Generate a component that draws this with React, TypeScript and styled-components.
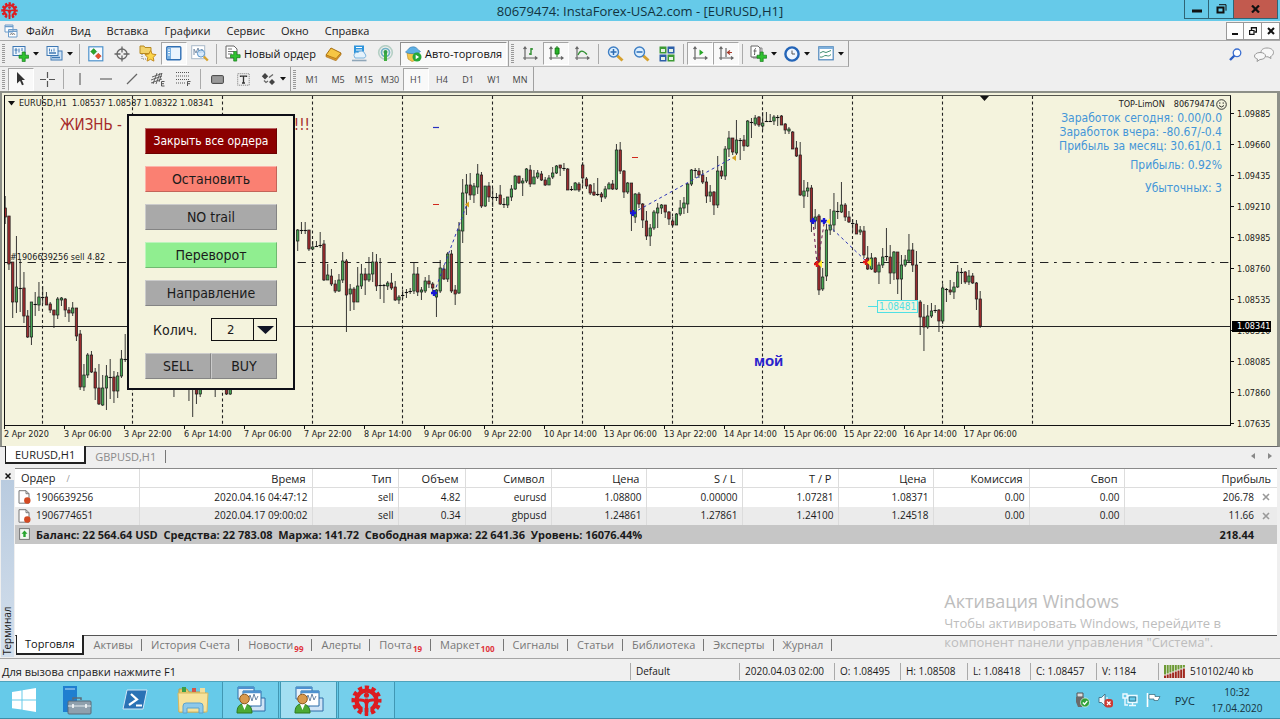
import React from "react";
import styled, { createGlobalStyle, css } from "styled-components";

const UI = '"Open Sans", "Noto Sans", sans-serif';
const CHART = '"DejaVu Sans Condensed", "DejaVu Sans", sans-serif';
const SKY = "#66cae9";
const FACE = "#efefef";
const PAPER = "#f4f3dd";

const GlobalStyle = createGlobalStyle`
  *, *::before, *::after { box-sizing: border-box; }
  body { margin: 0; background: ${FACE}; font-family: ${UI}; font-size: 11px; color: #1a1a1a; }
  button, select, input { font: inherit; color: inherit; margin: 0; }
  svg { display: block; flex: none; }
`;

/* ---------- window shell ---------- */

const Desktop = styled.div`
  display: flex;
  flex-direction: column;
  min-height: 100vh;
  overflow: hidden;
`;

const TitleBar = styled.header`
  display: grid;
  grid-template-columns: 1fr auto 1fr;
  height: 21px;
  background: ${SKY};
`;

const TitleIcon = styled.div`
  padding: 2px 0 0 1px;
`;

const Title = styled.h1`
  margin: 0;
  font-size: 13px;
  line-height: 22px;
  font-weight: 400;
  color: #12333e;
`;

const WindowButtons = styled.div`
  display: flex;
  justify-content: flex-end;
  align-items: flex-start;
  padding-right: 2px;
`;

const WindowButton = styled.button<{ $wide?: boolean }>`
  display: flex;
  align-items: center;
  justify-content: center;
  width: ${(p) => (p.$wide ? 44 : 25)}px;
  height: 19px;
  padding: 0;
  border: 1px solid #2f6475;
  border-top: 0;
  background: ${(p) => (p.$wide ? "#c25a4e" : SKY)};
  & + & { border-left-width: 0; }
`;

const MenuBar = styled.nav`
  display: flex;
  align-items: center;
  height: 20px;
  padding-left: 4px;
  background: #f0f0f0;
  border-bottom: 1px solid #a8a8a8;
`;

const MenuItem = styled.button`
  padding: 0;
  margin-right: 16px;
  border: 0;
  background: none;
  font-size: 11px;
  line-height: 18px;
`;

const ChartMenu = styled(MenuItem)`
  margin-right: 8px;
`;

const MdiButtons = styled.div`
  display: flex;
  margin-left: auto;
`;

const MdiButton = styled.button`
  display: flex;
  align-items: center;
  justify-content: center;
  width: 18px;
  height: 18px;
  padding: 0;
  border: 1px solid #999;
  background: #fdfdfd;
  & + & { border-left: 0; }
`;

/* ---------- tool bars ---------- */

const ToolBar = styled.div<{ $last?: boolean }>`
  display: flex;
  align-items: center;
  height: ${(p) => (p.$last ? 24 : 26)}px;
  background: ${FACE};
`;

const ToolGroup = styled.div<{ $under?: boolean }>`
  display: flex;
  align-items: center;
  height: 100%;
  border-right: 1px solid #a0a0a0;
  border-bottom: ${(p) => (p.$under ? "1px solid #b8b8b8" : "0")};
`;

const Grip = styled.span`
  flex: none;
  width: 3px;
  height: 19px;
  margin: 0 3px 0 2px;
  background: repeating-linear-gradient(#999 0 1px, #efefef 1px 2px);
`;

const ToolSeparator = styled.span`
  flex: none;
  width: 1px;
  height: 20px;
  margin: 0 3px;
  background: #aaa;
`;

const ToolButton = styled.button<{ $on?: boolean; $menu?: boolean }>`
  display: flex;
  align-items: center;
  justify-content: center;
  gap: 4px;
  flex: none;
  width: ${(p) => (p.$menu ? 34 : 26)}px;
  height: 23px;
  padding: 0;
  border: 1px solid transparent;
  background: none;
  font-size: 9px;
  color: #444;
  ${(p) =>
    p.$on &&
    css`
      border-color: #a5a5a5 #fff #fff #a5a5a5;
      background: #f9f9f9;
    `}
`;

const LabelledButton = styled.button<{ $on?: boolean }>`
  display: flex;
  align-items: center;
  gap: 3px;
  flex: none;
  height: 24px;
  padding: 0 4px;
  border: 1px solid transparent;
  background: none;
  font-size: 11px;
  color: #111;
  ${(p) =>
    p.$on &&
    css`
      border-color: #8f8f8f #fff #fff #8f8f8f;
      background: #f9f9f9;
      margin: 0 1px;
    `}
`;

const ToolTail = styled.div`
  display: flex;
  align-items: center;
  gap: 12px;
  margin-left: auto;
  padding-right: 6px;
`;

/* ---------- chart ---------- */

const ChartWindow = styled.main`
  display: flex;
  border: solid #8d9088;
  border-width: 2px 3px 1px 2px;
  border-bottom-color: #66666a;
  background: ${PAPER};
  padding: 2px 2px 0 2px;
`;

const ChartColumn = styled.div`
  flex: 1;
  min-width: 0;
`;

const Plot = styled.div`
  position: relative;
  border: 1px solid #111;
  border-top-color: #55554d;
  overflow: hidden;
`;

const PlotDrawing = styled.svg`
  width: 100%;
  height: 329px;
`;

const TimeAxis = styled.div`
  display: flex;
  height: 20px;
  overflow: hidden;
`;

const TimeLabel = styled.span`
  position: relative;
  flex: none;
  width: 60px;
  padding-top: 1px;
  font-family: ${CHART};
  font-size: 9px;
  line-height: 14px;
  white-space: nowrap;
  &::before {
    content: "";
    position: absolute;
    left: 0;
    top: 0;
    width: 1px;
    height: 3px;
    background: #111;
  }
`;

const PriceAxis = styled.div`
  position: relative;
  flex: none;
  width: 44px;
  padding-top: 3px;
`;

const PriceLabel = styled.div`
  display: flex;
  align-items: center;
  gap: 3px;
  height: 31px;
  font-family: ${CHART};
  font-size: 9px;
  &::before {
    content: "";
    width: 3px;
    height: 1px;
    background: #111;
  }
`;

const CurrentPrice = styled.div`
  position: absolute;
  left: 1px;
  top: 226px;
  width: 39px;
  padding-left: 5px;
  background: #000;
  color: #fff;
  font-family: ${CHART};
  font-size: 9px;
  line-height: 11px;
`;

const ChartCaption = styled.div`
  position: absolute;
  left: 3px;
  top: 0;
  display: flex;
  align-items: center;
  gap: 4px;
  font-family: ${CHART};
  font-size: 9px;
  line-height: 14px;
  white-space: pre;
`;

const Motto = styled.div`
  position: absolute;
  left: 55px;
  top: 20px;
  display: flex;
  justify-content: space-between;
  width: 250px;
  font-family: ${CHART};
  font-size: 15px;
  line-height: 18px;
  color: #a52a2a;
`;

const ChartNote = styled.div`
  position: absolute;
  left: 749px;
  top: 256px;
  font-family: "Liberation Sans", sans-serif;
  font-size: 15px;
  line-height: 18px;
  font-weight: 700;
  color: #2a22cc;
`;

const OrderCaption = styled.div`
  position: absolute;
  left: 5px;
  top: 154px;
  font-family: ${CHART};
  font-size: 9px;
  line-height: 14px;
`;

const LevelTag = styled.div`
  position: absolute;
  left: 872px;
  top: 204px;
  padding: 0 1px;
  border: 1px solid #4fe0e4;
  background: ${PAPER};
  color: #4fe0e4;
  font-family: ${CHART};
  font-size: 10px;
  line-height: 11px;
`;

const Account = styled.div`
  position: absolute;
  right: 3px;
  top: 2px;
  display: flex;
  align-items: center;
  gap: 9px;
  font-family: ${CHART};
  font-size: 9px;
  line-height: 12px;
`;

const AccountId = styled.span`
  display: flex;
  align-items: center;
  gap: 1px;
`;

const Stats = styled.div`
  position: absolute;
  right: 8px;
  top: 15px;
  text-align: right;
  font-family: ${CHART};
  font-size: 12px;
  line-height: 14px;
  color: #4496d8;
`;

const Stat = styled.div<{ $gap?: number }>`
  margin-top: ${(p) => p.$gap ?? 0}px;
`;

/* ---------- trade panel on the chart ---------- */

const TradePanel = styled.section`
  position: absolute;
  left: 122px;
  top: 18px;
  display: flex;
  flex-direction: column;
  gap: 12px;
  width: 168px;
  padding: 12px 16px 9px;
  border: 2px solid #0d0e16;
  background: ${PAPER};
  font-family: ${CHART};
`;

const tones = {
  dark: css`background: #8b0000; color: #fff; font-size: 12px;`,
  salmon: css`background: #fa8072;`,
  grey: css`background: #a9a9a9;`,
  green: css`background: #90ee90;`,
};

const PanelButton = styled.button<{ $tone: keyof typeof tones }>`
  flex: 1;
  height: 26px;
  padding: 0;
  border: 1px solid;
  border-color: rgba(255, 255, 255, 0.4) rgba(0, 0, 0, 0.22) rgba(0, 0, 0, 0.22) rgba(255, 255, 255, 0.4);
  font-size: 14px;
  line-height: 23px;
  color: #1b1b1b;
  ${(p) => tones[p.$tone]}
`;

const PanelRow = styled.div`
  display: flex;
  align-items: center;
`;

const CountLabel = styled.label`
  flex: 1;
  padding-left: 8px;
  font-size: 14px;
  line-height: 22px;
`;

const CountBox = styled.div`
  position: relative;
  display: flex;
  width: 66px;
  height: 23px;
  border: 1px solid #111;
`;

const CountSelect = styled.select`
  width: 100%;
  padding: 0 0 0 15px;
  border: 0;
  border-radius: 0;
  background: transparent;
  appearance: none;
  font-size: 13px;
`;

const CountArrow = styled.span`
  position: absolute;
  right: 0;
  top: 0;
  display: flex;
  align-items: center;
  justify-content: center;
  width: 23px;
  height: 21px;
  border-left: 1px solid #111;
  pointer-events: none;
`;

/* ---------- chart tabs ---------- */

const ChartTabs = styled.div`
  display: flex;
  height: 18px;
  padding-left: 5px;
  background: ${FACE};
  color: #8a8a8a;
`;

const ChartTab = styled.button<{ $on?: boolean }>`
  height: 18px;
  padding: 0 9px;
  border: 0;
  background: none;
  font-size: 11px;
  line-height: 15px;
  ${(p) =>
    p.$on &&
    css`
      margin-top: -1px;
      background: #fff;
      color: #222;
      border: solid #222;
      border-width: 0 2px 2px 1px;
    `}
`;

const TabMark = styled.span`
  width: 1px;
  height: 13px;
  margin-top: 3px;
  background: #777;
`;

const TabScroll = styled.div`
  display: flex;
  align-items: center;
  gap: 13px;
  margin-left: auto;
  padding-right: 8px;
`;

/* ---------- terminal ---------- */

const Terminal = styled.section`
  position: relative;
  display: flex;
  flex: 1;
  margin-top: 3px;
  background: ${FACE};
`;

const TerminalRail = styled.div`
  display: flex;
  flex-direction: column;
  align-items: center;
  width: 15px;
  padding-top: 3px;
`;

const RailClose = styled.button`
  padding: 0;
  height: 9px;
  border: 0;
  background: none;
`;

const RailTitle = styled.div`
  flex: 1;
  width: 13px;
  margin-bottom: 1px;
  background: linear-gradient(#d3dfec, #b9cbdf);
  writing-mode: vertical-rl;
  transform: rotate(180deg);
  text-align: left;
  padding-top: 2px;
  font-size: 10px;
  line-height: 12px;
`;

const TerminalBody = styled.div`
  display: flex;
  flex-direction: column;
  flex: 1;
  min-width: 0;
  margin-right: 3px;
  border-top: 1px solid #8a8a8a;
  background: #fff;
`;

const Orders = styled.table`
  width: 100%;
  border-collapse: collapse;
  table-layout: fixed;
  font-size: 10px;
  line-height: 17px;
`;

const HeadRow = styled.tr`
  height: 18px;
  font-size: 11px;
  border-bottom: 1px solid #ddd;
`;

const BodyRow = styled.tr<{ $alt?: boolean }>`
  height: ${(p) => (p.$alt ? 18 : 19)}px;
  background: ${(p) => (p.$alt ? "#ebebeb" : "#fff")};
`;

const SumRow = styled.tr`
  height: 19px;
  background: #c6c6c6;
  font-size: 11px;
  font-weight: 700;
`;

const Head = styled.th<{ $first?: boolean }>`
  padding: 0 6px;
  border-left: ${(p) => (p.$first ? "0" : "1px solid #ddd")};
  text-align: ${(p) => (p.$first ? "left" : "right")};
  font-weight: 400;
  white-space: pre;
`;

const SortMark = styled.span`
  margin-left: 11px;
  color: #999;
  font-size: 9px;
`;

const Cell = styled.td<{ $first?: boolean }>`
  padding: 0 4px 0 3px;
  border-left: ${(p) => (p.$first ? "0" : "1px solid #dcdcdc")};
  text-align: ${(p) => (p.$first ? "left" : "right")};
  white-space: pre;
`;

const IconText = styled.div`
  display: flex;
  align-items: center;
  gap: 5px;
`;

const Profit = styled.div`
  display: flex;
  align-items: center;
  justify-content: flex-end;
  gap: 8px;
`;

const ProfitSum = styled.div`
  padding-right: 19px;
  text-align: right;
`;

const RowClose = styled.button`
  width: 11px;
  height: 8px;
  padding: 0;
  border: 0;
  background: none;
`;

const TerminalTabs = styled.div`
  display: flex;
  align-items: flex-start;
  height: 23px;
  margin-top: auto;
  padding-left: 1px;
  border-top: 1px solid #555;
  background: ${FACE};
  color: #777;
`;

const TerminalTab = styled.button<{ $on?: boolean }>`
  position: relative;
  display: flex;
  height: 18px;
  padding: 0 9px;
  border: 0;
  background: none;
  font-size: 11px;
  line-height: 17px;
  &:not(:first-child)::after {
    content: "";
    position: absolute;
    right: 0;
    top: 3px;
    width: 1px;
    height: 12px;
    background: #777;
  }
  ${(p) =>
    p.$on &&
    css`
      height: 20px;
      margin-top: -1px;
      padding: 0 8px;
      color: #111;
      background: #fff;
      border: solid #222;
      border-width: 0 2px 2px 1px;
    `}
`;

const Count = styled.span`
  padding: 4px 0 0 1px;
  font-size: 8px;
  font-weight: 700;
  color: #e0343c;
`;

const Watermark = styled.div`
  position: absolute;
  right: 59px;
  bottom: 6px;
  color: #bdbdbd;
  font-size: 13px;
  line-height: 19px;
  pointer-events: none;
`;

const WatermarkTitle = styled.div`
  font-size: 18px;
  line-height: 25px;
`;

/* ---------- status bar ---------- */

const StatusBar = styled.footer`
  display: flex;
  align-items: center;
  height: 23px;
  padding-top: 3px;
  border-top: 1px solid #a5a5a5;
  background: #f0f0f0;
  font-size: 11px;
  line-height: 17px;
  white-space: nowrap;
`;

const StatusHelp = styled.div`
  flex: 1;
  padding-left: 2px;
`;

const StatusCell = styled.div<{ $w: number }>`
  display: flex;
  align-items: center;
  gap: 4px;
  width: ${(p) => p.$w}px;
  height: 17px;
  padding-left: 5px;
  border-left: 1px solid #aaa;
  font-size: 10px;
`;

/* ---------- task bar ---------- */

const TaskBar = styled.div`
  display: flex;
  align-items: stretch;
  height: 38px;
  background: ${SKY};
  border-top: 1px solid #4ea3bd;
  border-bottom: 1px solid #3d8ea8;
`;

const TaskButton = styled.button<{ $state?: "open" | "front" }>`
  display: flex;
  align-items: center;
  justify-content: center;
  width: 58px;
  padding: 0;
  border: 0;
  background: none;
  ${(p) =>
    p.$state &&
    css`
      border: solid #4197b3;
      border-width: 0 1px;
      margin-right: 1px;
      width: 57px;
      background: ${p.$state === "front" ? "#a3dff2" : "#74cfeb"};
    `}
`;

const StartButton = styled(TaskButton)`
  width: 48px;
`;

const Tray = styled.div`
  display: flex;
  align-items: center;
  gap: 8px;
  margin-left: auto;
  color: #16333d;
  font-size: 11px;
`;

const Language = styled.span`
  margin: 0 1px 0 6px;
`;

const Clock = styled.time`
  width: 66px;
  margin-right: 10px;
  text-align: center;
  font-size: 10px;
  line-height: 16px;
`;

/* ---------- icons ---------- */

const Caret = () => (
  <svg width="6" height="4" viewBox="0 0 6 4"><path d="M0 0h6L3 3.6z" fill="#111" /></svg>
);

const Plus = ({ x = 7, y = 7 }: { x?: number; y?: number }) => (
  <path transform={`translate(${x} ${y})`} d="M3.2 0h3v3.2H9.6v3H6.2V9.6h-3V6.2H0v-3h3.2z" fill="#2fc22f" stroke="#14781a" strokeWidth=".7" />
);

const Cog = ({ size }: { size: number }) => (
  <svg width={size} height={size} viewBox="0 0 32 32">
    <g fill="none" stroke="#dc1c20">
      <circle cx="16" cy="16" r="13.5" strokeWidth="4" strokeDasharray="4.4 2.67" strokeDashoffset="2.2" />
      <circle cx="16" cy="16" r="10.2" strokeWidth="4.4" />
      <path d="M16 14v18" strokeWidth="3.4" />
      <path d="M5 15.5h5c3.500 0 6 1.500 6 5c0-3.500 2.500-5 6-5h5" strokeWidth="3" />
    </g>
    <circle cx="16" cy="10.5" r="2.6" fill="#dc1c20" />
    <path d="M13 22v10M19 22v10" stroke={SKY} strokeWidth="2" />
  </svg>
);

const NewChartIcon = () => (
  <svg width="17" height="17" viewBox="0 0 17 17">
    <rect x="1" y="1.5" width="12" height="9" fill="#eef6fd" stroke="#3e78b4" />
    <path d="M4 3v6M2.500 5h3M7 3.5v4M10 3v3" stroke="#3e78b4" />
    <Plus />
  </svg>
);
const ProfilesIcon = () => (
  <svg width="17" height="17" viewBox="0 0 17 17" stroke="#3e78b4">
    <rect x="5" y="6" width="11" height="9" fill="#cfe3f6" />
    <rect x="1" y="1.5" width="11" height="9" fill="#eef6fd" />
    <path d="M3 8h7M6 12.500h8" strokeWidth="1.300" />
    <path d="M3.500 3.500v3M5.500 4.500v2M8 3.500v3" strokeWidth=".9" />
  </svg>
);
const MarketIcon = () => (
  <svg width="16" height="16" viewBox="0 0 16 16">
    <rect x=".8" y=".8" width="14" height="14" fill="#f7fbff" stroke="#4f93cc" strokeWidth="1.2" />
    <path d="M5.700 2.600l3 3-3 3-3-3z" fill="#2aa52a" stroke="#177a17" strokeWidth=".5" />
    <path d="M10.300 7.200l2.900 2.900-2.900 2.900-2.900-2.900z" fill="#e8502c" stroke="#a82c12" strokeWidth=".5" />
  </svg>
);
const TargetIcon = () => (
  <svg width="16" height="16" viewBox="0 0 16 16" fill="none" stroke="#666" strokeWidth="1.3">
    <circle cx="8" cy="8" r="5" />
    <path d="M8 .5v6M8 9.500v6M.5 8h6M9.500 8h6" />
  </svg>
);
const NavigatorIcon = () => (
  <svg width="18" height="17" viewBox="0 0 18 17">
    <path d="M1 1h4l1 1.500h6v6H1z" fill="#f3d36b" stroke="#b78a23" />
    <path d="M3 9v5h4" fill="none" stroke="#777" strokeDasharray="1 1" />
    <path d="M11.500 5.500l1.700 3.500 3.800.6-2.700 2.700.6 3.800-3.400-1.800-3.400 1.800.6-3.800L6 9.600l3.800-.6z" fill="#fbd54a" stroke="#c48a1c" />
  </svg>
);
const PanelIcon = () => (
  <svg width="16" height="15" viewBox="0 0 16 15">
    <rect x=".8" y=".8" width="14" height="13" rx="1" fill="#eaf4fd" stroke="#2f6fb4" strokeWidth="1.4" />
    <path d="M1 2h4v11H1z" fill="#79b1e2" />
    <path d="M2 4h2M2 6.500h2M2 9h2" stroke="#fff" />
  </svg>
);
const TesterIcon = () => (
  <svg width="18" height="17" viewBox="0 0 18 17">
    <rect x=".7" y=".7" width="13" height="13" fill="#fff" stroke="#a9b9c9" />
    <path d="M3 10V4l2 4 2-5 2 5 2-4v4" fill="none" stroke="#7a8fa8" />
    <circle cx="10" cy="8.5" r="3.6" fill="#cfe6fb" fillOpacity=".8" stroke="#5a94c8" />
    <path d="M12.800 11.500l4 4" stroke="#d7a22d" strokeWidth="2.4" />
  </svg>
);
const NewOrderIcon = () => (
  <svg width="16" height="17" viewBox="0 0 16 17">
    <path d="M1 1h8l3 3v9H1z" fill="#fff" stroke="#666" />
    <path d="M3 4h4M3 6.500h6M3 9h4" stroke="#777" />
    <Plus x={5.5} y={6.5} />
  </svg>
);
const BookIcon = () => (
  <svg width="17" height="14" viewBox="0 0 17 14">
    <path d="M1 8l5-7 10 5-5 6.500z" fill="#f6c644" stroke="#a76f12" />
    <path d="M1 8v1.800l10 4 5-6V6l-5 5.500z" fill="#d9962a" stroke="#a76f12" strokeWidth=".6" />
  </svg>
);
const VpsIcon = () => (
  <svg width="17" height="17" viewBox="0 0 17 17">
    <path d="M3 .5h10v8H3z" fill="#2f95dc" />
    <path d="M5 2.500h6M5 5h6" stroke="#fff" />
    <path d="M3 10.500a3 3 0 0 1 4-3 4 4 0 0 1 7 1.500 2.300 2.300 0 0 1-1 4H4z" fill="#e4f2fc" stroke="#79b2dd" />
    <path d="M1 15.500h14.500" stroke="#8fa6b8" strokeWidth="1.6" />
  </svg>
);
const SignalIcon = () => (
  <svg width="17" height="17" viewBox="0 0 17 17" fill="none">
    <circle cx="8.500" cy="7.500" r="6.800" stroke="#b4cfc4" strokeWidth="1.6" />
    <circle cx="8.500" cy="7.500" r="4" stroke="#6fb2c4" strokeWidth="1.7" />
    <path d="M8.500 7.500v8.500" stroke="#3fae3f" strokeWidth="3" />
    <circle cx="8.500" cy="7" r="2" fill="#2f9f46" />
  </svg>
);
const RobotIcon = () => (
  <svg width="17" height="16" viewBox="0 0 17 16">
    <path d="M2 7h11l-1 7-5 1.500L3 13z" fill="#f3c64c" stroke="#b98a20" strokeWidth=".6" />
    <path d="M.5 6c1-1 2-1.500 3-3C5 .5 10 0 12 2.500c1 1.500 2.500 2 3.500 3-2 2.500-12 3-15 .5z" fill="#5eb0e5" stroke="#3579ad" strokeWidth=".6" />
    <circle cx="12" cy="11" r="4.500" fill="#27a83a" />
    <path d="M10.700 8.700l3.400 2.300-3.400 2.300z" fill="#fff" />
  </svg>
);
const Axes = () => <path d="M3 1v13M1 12h14M1.500 3L3 1l1.500 2M13 10.500l2 1.500-2 1.500" fill="none" stroke="#666" strokeWidth="1.2" />;
const BarsIcon = () => (
  <svg width="16" height="15" viewBox="0 0 16 15"><Axes /><path d="M9 2v7M9 3h2M7 8h2" stroke="#2f8f2f" strokeWidth="1.4" /></svg>
);
const CandleIcon = () => (
  <svg width="16" height="15" viewBox="0 0 16 15"><Axes /><path d="M9 0v11" stroke="#157a15" /><path d="M7.200 2h3.800v6H7.200z" fill="#27b527" stroke="#157a15" /></svg>
);
const LineIcon = () => (
  <svg width="16" height="15" viewBox="0 0 16 15"><Axes /><path d="M4 9c2-5 5-5 9-.5" fill="none" stroke="#2f8f2f" strokeWidth="1.2" /></svg>
);
const Loupe = ({ plus }: { plus?: boolean }) => (
  <svg width="17" height="16" viewBox="0 0 17 16">
    <path d="M10 9.500l5.500 5" stroke="#d6a12f" strokeWidth="3" />
    <circle cx="6.500" cy="6" r="5" fill="#dcefff" stroke="#3f7fc4" strokeWidth="1.4" />
    <path d={plus ? "M3.500 6h6M6.500 3v6" : "M3.500 6h6"} stroke="#2c6cb4" strokeWidth="1.5" />
  </svg>
);
const TileIcon = () => (
  <svg width="16" height="16" viewBox="0 0 16 16">
    <path d="M.5.5h7v7h-7zM8.500 8.500h7v7h-7z" fill="#3d9b35" />
    <path d="M8.500.5h7v7h-7zM.5 8.500h7v7h-7z" fill="#2d5fa8" />
    <path d="M2 3h4v3H2zM10 3h4v3h-4zM2 11h4v3H2zM10 11h4v3h-4z" fill="#e8f3e6" />
  </svg>
);
const ScrollIcon = () => (
  <svg width="16" height="15" viewBox="0 0 16 15"><Axes /><path d="M7.500 3.500l4 3-4 3z" fill="#27a527" /></svg>
);
const ShiftIcon = () => (
  <svg width="16" height="15" viewBox="0 0 16 15"><Axes /><path d="M8 2v9" stroke="#666" strokeWidth="1.2" /><path d="M14 6.500h-4M12 4.500l-2.500 2 2.500 2" fill="none" stroke="#a8392a" strokeWidth="1.2" /></svg>
);
const IndicatorIcon = () => (
  <svg width="17" height="17" viewBox="0 0 17 17">
    <path d="M3 3h9v10H3z" fill="#ddd" stroke="#888" />
    <path d="M1 1h7l2 2v9H1z" fill="#fff" stroke="#666" />
    <path d="M6 3.500c-2 0-1 3-1.500 6.500M3.500 6h3" fill="none" stroke="#555" />
    <Plus />
  </svg>
);
const ClockIcon = () => (
  <svg width="16" height="16" viewBox="0 0 16 16">
    <circle cx="8" cy="8" r="6.600" fill="#eef6ff" stroke="#2465b8" strokeWidth="2.4" />
    <path d="M8 4.500V8h3" fill="none" stroke="#555" />
  </svg>
);
const TemplateIcon = () => (
  <svg width="16" height="15" viewBox="0 0 16 15">
    <rect x=".8" y=".8" width="14.400" height="13" fill="#fff" stroke="#4b85bb" strokeWidth="1.2" />
    <path d="M1 2h14" stroke="#7fb0dc" strokeWidth="2" />
    <path d="M2 7l3-1.500 3 1 5-2M2 11c3 1 4-2 6-1.500s3 1 5-1" fill="none" stroke="#3f8f6f" />
  </svg>
);
const CursorIcon = () => (
  <svg width="10" height="15" viewBox="0 0 10 15"><path d="M1 0l8 8H5.800l2 4.500-1.800.8-2-4.500L1 11.500z" fill="#333" /></svg>
);
const CrossIcon = () => (
  <svg width="15" height="15" viewBox="0 0 15 15"><path d="M7.500 0v6M7.500 9v6M0 7.500h6M9 7.500h6" stroke="#555" strokeWidth="1.2" /></svg>
);
const StrokeIcon = ({ d }: { d: string }) => (
  <svg width="14" height="14" viewBox="0 0 14 14"><path d={d} stroke="#666" strokeWidth="1.2" fill="none" /></svg>
);
const ChannelIcon = () => (
  <svg width="16" height="16" viewBox="0 0 16 16" stroke="#555" fill="none">
    <path d="M1 9l11-4M1 12l11-4M2 6l10-3.500M3 13L7 2M6 13l4-11M9 11l3-9" strokeWidth=".9" />
    <path d="M14.500 10.500H11.500v4.500h3M11.500 12.700h2.500" />
  </svg>
);
const FiboIcon = () => (
  <svg width="16" height="16" viewBox="0 0 16 16" stroke="#555" fill="none">
    <path d="M0 1.500h14M0 5h14M0 8.500h14M0 12h9" strokeDasharray="1 1" />
    <path d="M14.500 10.500H11.500V15M11.500 12.700h2.500" />
  </svg>
);
const TextIcon = () => (
  <svg width="13" height="13" viewBox="0 0 13 13" fill="none">
    <rect x=".7" y=".7" width="11.500" height="11.500" stroke="#777" strokeDasharray="1 1" />
    <path d="M3.500 4V3.200h6V4M6.500 3v7M5 10h3" stroke="#333" strokeWidth="1.3" />
  </svg>
);
const ShapesIcon = () => (
  <svg width="15" height="14" viewBox="0 0 15 14">
    <path d="M4 1l3.200 3.200L4 7.400.8 4.200zM11 13l-3-3 3-3 3 3z" fill="#444" />
    <path d="M3 8.500l2 2 2-1.500M8 5.500l4-3" fill="none" stroke="#666" strokeWidth="1.3" />
  </svg>
);
const SearchIcon = () => (
  <svg width="13" height="13" viewBox="0 0 13 13"><path d="M1 12l5-5" stroke="#2c5fc4" strokeWidth="2.4" /><circle cx="8" cy="4.800" r="3.800" fill="#fff" stroke="#3b6fd0" strokeWidth="1.3" /></svg>
);
const ChatIcon = () => (
  <svg width="20" height="15" viewBox="0 0 20 15" fill="#f7f7f7" stroke="#999">
    <path d="M13 1c4 0 6.500 2 6.500 4.300S18 9 16.500 9.500l.5 2-3-1.700C10 10 7 8 7 5.300S9.500 1 13 1z" />
    <path d="M6 5.500c3.500 0 5.500 1.500 5.500 3.500S9 12.500 6 12.500L3 14.500l.5-2.500C1.500 11.500.5 10.500.5 9S2.500 5.500 6 5.500z" />
  </svg>
);
const MdiIcon = () => (
  <svg width="14" height="14" viewBox="0 0 14 14" fill="#fff" stroke="#6c9cca">
    <path d="M1 1h8v7H1zM4.500 5.500h8.500v7.500H4.500z" />
    <path d="M1 2.500h8M4.500 7.200h8.500" strokeWidth="1.4" />
    <path d="M6 11l1.500-2 1 2 1-2 1.500 2" fill="none" stroke="#777" strokeWidth=".8" />
  </svg>
);
const DocIcon = () => (
  <svg width="13" height="14" viewBox="0 0 13 14">
    <path d="M1 .7h7l3 3v9.500H1z" fill="#fff" stroke="#777" />
    <path d="M8 .7v3h3" fill="none" stroke="#777" />
    <circle cx="9.300" cy="10.500" r="3.200" fill="#d34a23" />
  </svg>
);
const BalanceIcon = () => (
  <svg width="13" height="12" viewBox="0 0 13 12">
    <rect x="1.600" y=".6" width="9.800" height="10.800" fill="#f2f8f2" stroke="#777" />
    <path d="M6.500 2.500l3 3.200H7.700V9H5.300V5.700H3.500z" fill="#27a52f" />
  </svg>
);
const GreyCross = () => (
  <svg width="8" height="8" viewBox="0 0 8 8"><path d="M1 1l6 6M7 1L1 7" stroke="#999" strokeWidth="1.600" /></svg>
);
const BandwidthIcon = () => (
  <svg width="22" height="13" viewBox="0 0 22 13">
    {[0, 1, 2, 3, 4, 5, 6, 7].map((n) => (
      <g key={n}>
        <rect x={n * 2.7} y="0" width="2" height={9.5 - n * 1} fill="#6d9a34" />
        <rect x={n * 2.7} y={10.5 - n * 1} width="2" height={2.5 + n * 1} fill="#a0271d" />
      </g>
    ))}
  </svg>
);
const WindowsIcon = () => (
  <svg width="26" height="24" viewBox="0 0 26 24" fill="#fff">
    <path d="M1 4l9.500-1.500V11.500H1zM11.500 2.300L25 0v11.500H11.500zM1 12.500h9.500v9L1 20.200zM11.500 12.500H25V24l-13.500-2.200z" />
  </svg>
);
const ServerIcon = () => (
  <svg width="30" height="30" viewBox="0 0 30 30">
    <path d="M1 1h14v26H1z" fill="#1f7fd0" />
    <path d="M3 4h10" stroke="#bfe0f7" />
    <path d="M11 15v-2h8v2" fill="none" stroke="#5c6d7a" strokeWidth="1.5" />
    <rect x="6" y="16" width="23" height="13" rx="1" fill="#8fa0ad" stroke="#586a78" />
    <path d="M6 21h23" stroke="#e3eaee" />
    <path d="M11 19v4M24 19v4" stroke="#fff" strokeWidth="1.5" />
  </svg>
);
const ShellIcon = () => (
  <svg width="26" height="22" viewBox="0 0 26 22">
    <path d="M5 1h20l-4 19H1z" fill="#2a72b5" stroke="#cfe6f6" />
    <path d="M9 5l6 5.500L7 16M14 16.500h6" fill="none" stroke="#fff" strokeWidth="2.200" />
  </svg>
);
const FolderIcon = () => (
  <svg width="32" height="28" viewBox="0 0 32 28">
    <path d="M2 3h8l2 3h16v20H2z" fill="#e9c869" stroke="#c29f45" />
    <path d="M5 1h4v5H5z" fill="#38a04a" /><path d="M15 2h4v4h-4z" fill="#d2564a" /><path d="M23 2h5v5h-5z" fill="#f1df9f" />
    <path d="M1 7h30l-1 19H2z" fill="#f7e29b" stroke="#d4b760" />
    <path d="M6 27v-7q0-3 3-3h14q3 0 3 3v7h-4v-5H10v5z" fill="#8ec9ea" stroke="#5aa3cf" />
  </svg>
);
const TraderIcon = () => (
  <svg width="30" height="28" viewBox="0 0 30 28">
    <path d="M2 1h16v12H2z" fill="#e7f1fa" stroke="#2d6ca8" />
    <path d="M2 2h16" stroke="#4e91cf" strokeWidth="2" />
    <path d="M19 12h10v13H13z" fill="#cfe3f5" stroke="#2d6ca8" />
    <path d="M7 5h18v15H7z" fill="#fff" stroke="#2d6ca8" />
    <path d="M7 6h18" stroke="#4e91cf" strokeWidth="2.5" />
    <path d="M12 14l2-5 2 6 2-7 2 6 2-4" fill="none" stroke="#6a86a6" />
    <path d="M1 27c0-6 2-9 7-9s8 3 8 9z" fill="#4caa35" stroke="#2d7a1d" />
    <path d="M6 18l2.500 6 2.500-6z" fill="#fff" />
    <circle cx="8.500" cy="13" r="4.800" fill="#d99a4e" stroke="#8f5a20" />
  </svg>
);
const UsbIcon = () => (
  <svg width="16" height="16" viewBox="0 0 16 16">
    <path d="M3 1h6v4H3z" fill="#ddd" stroke="#555" /><path d="M2 5h8v5l-2 5H4l-2-5z" fill="#6a6a6a" />
    <circle cx="11" cy="10.500" r="4.500" fill="#2fa33a" stroke="#fff" strokeWidth=".6" />
    <path d="M8.800 10.500l1.700 1.700 2.800-3.200" fill="none" stroke="#fff" strokeWidth="1.3" />
  </svg>
);
const SoundIcon = () => (
  <svg width="16" height="15" viewBox="0 0 16 15">
    <path d="M1 4.500h2.500L7 1v12L3.500 9.500H1z" fill="#f4fbfe" stroke="#376576" strokeWidth=".8" />
    <path d="M9 4v5" stroke="#fff" />
    <rect x="6.500" y="6" width="8.500" height="8.500" rx="3" fill="#cc3a33" />
    <path d="M9 8.500l3.500 3.500M12.500 8.500L9 12" stroke="#fff" strokeWidth="1.3" />
  </svg>
);
const NetIcon = () => (
  <svg width="16" height="14" viewBox="0 0 16 14" fill="none" stroke="#eefaff" strokeWidth="1.4">
    <path d="M6 2.500h9v7H6zM7 12.500h7M10.500 10v2.500M1 1h4v4H1zM3 5v7h3" />
    <path d="M7.200 4h6.500v4H7.200z" stroke="#2e6a80" strokeWidth=".8" />
  </svg>
);
const FlagIcon = () => (
  <svg width="15" height="14" viewBox="0 0 15 14"><path d="M1.500 0v14" stroke="#fff" strokeWidth="1.6" /><path d="M3 1.500h6v2h5l-2 4H8v-1.500H3z" fill="#fff" stroke="#376576" strokeWidth=".7" /></svg>
);
const Smile = () => (
  <svg width="11" height="11" viewBox="0 0 11 11" fill="none" stroke="#222" strokeWidth=".9">
    <circle cx="5.500" cy="5.500" r="4.800" /><path d="M3 6.500q2.500 3 5 0M3.800 3.300v1.500M7.200 3.300v1.500" />
  </svg>
);

/* ---------- price series ---------- */

type Bar = [index: number, high: number, low: number, top: number, bottom: number, kind: "u" | "d" | "n"];

// Columns: bar number, high, low, body top, body bottom; u = rising, d = falling, n = flat.
const SERIES = `
0 196 224 208 217 d;1 216 270 216 264 d;2 262 318 262 302 d;3 236 313 287 302 u;4 260 312 288 289 n;5 272 323 288 316 d;
6 310 338 316 337 d;7 302 345 302 337 u;8 292 316 304 305 n;9 282 311 297 305 u;10 286 304 297 298 n;11 292 305 297 305 d;
12 302 313 304 310 d;13 310 328 310 315 d;14 297 319 299 315 u;15 297 306 298 300 u;16 298 317 299 310 d;17 307 322 310 313 d;
18 302 316 308 313 u;19 308 341 308 336 d;20 330 390 334 387 d;21 364 391 375 387 u;22 353 378 355 375 u;23 351 373 355 372 d;
24 368 400 372 388 d;25 364 405 388 404 d;26 375 406 388 405 u;27 365 410 376 388 u;28 359 399 377 378 n;29 371 403 377 391 d;
30 372 398 376 391 u;31 350 378 359 376 u;32 334 362 359 360 n;45 370 397 380 381 n;49 380 401 380 381 n;50 380 417 380 386 n;
51 380 404 380 394 d;52 380 397 380 394 u;56 380 397 380 384 n;59 380 395 380 394 d;60 380 395 380 394 u;
78 229 251 230 241 u;79 222 234 230 231 n;80 222 234 230 231 n;81 230 251 230 249 d;82 241 250 247 249 u;83 241 247 246 247 n;
84 232 248 245 246 n;85 240 281 244 280 d;86 264 280 275 280 u;87 269 286 276 284 d;88 280 293 284 291 d;89 274 292 280 291 u;
90 252 283 261 280 u;91 259 332 261 295 d;92 284 311 289 294 u;93 287 310 289 302 d;94 267 302 286 302 u;95 264 289 274 286 u;
96 268 295 274 280 d;97 257 282 274 280 u;98 252 282 262 274 u;99 254 291 262 286 d;100 258 299 285 286 n;101 284 303 285 286 n;
102 281 290 283 286 u;103 273 290 283 288 d;104 281 301 287 300 d;105 295 304 297 300 u;106 290 299 295 296 n;107 289 298 292 293 n;
108 288 294 291 292 n;109 263 294 274 291 u;110 267 296 274 292 d;111 287 300 290 292 u;112 277 293 281 291 u;113 275 288 281 284 d;
114 282 294 284 288 d;115 289 317 290 297 u;116 260 293 268 291 u;117 265 280 269 279 d;118 252 282 254 279 u;119 250 293 254 291 d;
120 285 305 290 294 d;121 222 294 230 293 u;122 179 243 193 231 u;123 174 215 185 193 u;124 173 200 185 195 d;125 183 203 186 195 u;
126 164 194 174 187 u;127 172 208 175 206 d;128 186 207 186 206 u;129 182 202 186 197 d;130 188 207 197 198 n;131 193 201 197 198 n;
132 185 205 195 204 d;133 198 208 204 205 n;134 197 208 197 205 u;135 185 201 189 197 u;136 175 190 176 189 u;137 176 184 176 183 d;
138 178 196 181 183 u;139 168 183 169 181 u;140 165 187 170 184 d;141 170 184 177 184 u;142 170 179 173 177 u;143 171 181 174 180 d;
144 177 186 180 185 d;145 175 185 178 185 u;146 167 179 173 177 u;147 165 174 166 173 u;148 165 176 165 168 d;149 163 171 168 169 n;
150 168 190 169 190 d;151 186 191 189 190 n;152 182 190 183 190 u;153 182 192 184 190 d;154 162 186 165 178 d;155 177 189 179 186 d;
156 184 195 185 193 d;157 183 196 192 195 d;158 178 196 194 195 n;159 192 202 194 197 d;160 186 199 189 197 u;161 182 189 184 189 u;
162 180 190 184 189 d;163 144 190 150 189 u;164 142 174 150 171 d;165 170 198 171 192 d;166 182 194 183 192 u;167 183 231 183 212 d;
168 193 223 194 217 u;169 192 208 194 204 d;170 203 228 204 220 d;171 211 240 221 236 d;172 224 246 228 236 u;173 210 230 212 228 u;
174 203 228 208 213 u;175 204 214 205 208 u;176 205 218 205 212 d;177 211 225 212 219 d;178 217 227 221 225 d;179 213 225 214 225 u;
180 200 216 208 214 u;181 197 214 203 208 u;182 183 213 184 204 u;183 169 186 170 184 u;184 168 178 170 171 n;185 168 178 171 175 d;
186 170 184 175 182 d;187 177 203 182 196 d;188 185 202 192 196 u;189 191 215 192 205 d;190 156 208 171 205 u;191 166 179 171 176 d;
192 146 180 149 176 u;193 131 157 138 149 u;194 138 155 138 152 d;195 120 155 140 153 u;196 138 160 140 141 n;197 135 151 140 146 d;
198 120 147 121 146 u;199 118 138 122 123 n;200 115 126 118 124 u;201 116 127 117 125 d;202 112 130 123 126 u;203 112 122 121 122 n;
204 114 122 121 122 n;205 115 125 117 121 u;206 115 126 117 118 n;207 115 125 116 125 d;208 123 134 124 130 d;209 127 134 129 131 u;
210 131 149 132 149 d;211 141 157 148 156 d;212 142 196 155 195 d;213 180 208 191 196 u;214 182 197 188 191 u;215 185 232 188 221 d;
216 209 229 217 221 u;217 214 295 216 290 d;218 268 291 277 289 u;219 224 281 230 276 u;220 209 235 225 230 u;221 193 232 211 225 u;
222 202 219 211 212 n;223 182 213 205 212 u;224 203 221 205 217 d;225 211 223 217 222 d;226 219 232 223 224 n;227 220 234 224 234 d;
228 226 235 230 232 u;229 226 258 231 255 d;230 246 270 258 269 d;231 253 270 258 269 u;232 257 273 258 272 d;233 262 284 265 272 u;
234 248 268 257 265 u;235 228 261 256 257 n;236 245 284 257 273 d;237 251 280 252 273 u;238 252 294 252 279 d;239 255 300 265 279 u;
240 255 267 260 265 u;241 234 262 250 261 u;242 243 272 250 265 d;243 251 303 265 302 d;244 300 335 302 317 d;245 304 351 317 327 d;
246 305 329 316 327 u;247 303 318 311 316 u;248 305 313 310 311 n;249 309 332 310 321 d;250 284 324 288 321 u;251 288 302 289 290 n;
252 280 295 290 292 d;253 282 299 287 292 u;254 265 288 272 287 u;255 268 284 272 273 n;256 271 284 272 282 d;257 270 285 276 282 u;
258 273 284 276 283 d;259 282 310 283 299 d;260 291 328 299 326 d`;

const bars: Bar[] = SERIES.trim().split(";").map((row) => {
  const c = row.trim().split(" ");
  return [+c[0], +c[1], +c[2], +c[3], +c[4], c[5] as Bar[5]];
});

const bodyFill = { u: "#46a552", d: "#9c2b2e", n: "#111" };

const Candle = ({ bar: [i, high, low, top, bottom, kind] }: { bar: Bar }) => {
  const x = 5.2 + i * 3.75;
  return (
    <g>
      <path d={`M${x} ${high}V${low}`} stroke="#222" strokeWidth=".9" />
      {kind === "n" ? (
        <path d={`M${x - 1.7} ${top + 0.5}h3.4`} stroke="#111" strokeWidth="1.1" />
      ) : (
        <rect x={x - 1.2} y={top} width="2.4" height={Math.max(2, bottom - top)} fill={bodyFill[kind]} stroke="#1b1b1b" strokeWidth=".7" />
      )}
    </g>
  );
};

const Mark = ({ x, y, color }: { x: number; y: number; color: string }) => (
  <path d={`M${x - 3} ${y}h6M${x} ${y - 3}v6`} stroke={color} strokeWidth="2.4" />
);

const ChartDrawing = () => (
  <PlotDrawing role="img" aria-label="EURUSD H1">
    {Array.from({ length: 12 }, (_, n) => (
      <line key={n} x1={37.5 + n * 90} x2={37.5 + n * 90} y1="0" y2="329" stroke="#222" strokeWidth="1.1" strokeDasharray="3 2.6" />
    ))}
    <line x1="0" x2="100%" y1="166.5" y2="166.5" stroke="#222" strokeDasharray="8.4 5.6 2.8 5.7" />
    <line x1="0" x2="100%" y1="230.5" y2="230.5" stroke="#222" strokeWidth="1.2" />
    <g transform="translate(-5 -96)">
      {bars.map((bar) => <Candle key={bar[0]} bar={bar} />)}
      <g fill="none" stroke="#2c34b8" strokeDasharray="3 3">
        <path d="M434 293L467 204M633 213L734 157M824 221L867 262" />
        <path d="M813 221L817 264M818 262L824 224" stroke="#6b1450" />
      </g>
      <path d="M433 127.500h6" stroke="#2830c0" strokeWidth="1.2" />
      <path d="M433 204.500h6M632 157.500h6" stroke="#d0281c" strokeWidth="1.2" />
      <path d="M868 306.500h9" stroke="#4fe0e4" />
      <path d="M465 204.500l4-3v6zM732 158l4-3v6z" fill="#d9a520" />
      <Mark x={434} y={293} color="#1717d8" />
      <Mark x={633} y={213} color="#1717d8" />
      <Mark x={813} y={221} color="#1717d8" />
      <Mark x={824} y={221} color="#1717d8" />
      <Mark x={817} y={264} color="#e01818" />
      <Mark x={866} y={262} color="#e01818" />
      <path d="M826 221.500l4-3v6zM818 264l4-4v8zM867 262.500l4-4v8z" fill="#ffee2a" />
      <path d="M980 96h9l-4.500 5z" fill="#111" />
    </g>
  </PlotDrawing>
);

/* ---------- data ---------- */

const menus = ["Файл", "Вид", "Вставка", "Графики", "Сервис", "Окно", "Справка"];
const frames = ["M1", "M5", "M15", "M30", "H1", "H4", "D1", "W1", "MN"];
const prices = ["1.09885", "1.09660", "1.09435", "1.09210", "1.08985", "1.08760", "1.08535", "1.08310", "1.08085", "1.07860", "1.07635"];
const times = [
  "2 Apr 2020", "3 Apr 06:00", "3 Apr 22:00", "6 Apr 14:00", "7 Apr 06:00", "7 Apr 22:00", "8 Apr 14:00", "9 Apr 06:00", "9 Apr 22:00",
  "10 Apr 14:00", "13 Apr 06:00", "13 Apr 22:00", "14 Apr 14:00", "15 Apr 06:00", "15 Apr 22:00", "16 Apr 14:00", "17 Apr 06:00",
];
const columns: [string, number?][] = [
  ["Ордер", 124], ["Время", 173], ["Тип", 86], ["Объем", 67], ["Символ", 86], ["Цена", 95], ["S / L", 96], ["T / P", 96],
  ["Цена", 95], ["Комиссия", 96], ["Своп", 95], ["Прибыль"],
];
const orders = [
  ["1906639256", "2020.04.16 04:47:12", "sell", "4.82", "eurusd", "1.08800", "0.00000", "1.07281", "1.08371", "0.00", "0.00", "206.78"],
  ["1906774651", "2020.04.17 09:00:02", "sell", "0.34", "gbpusd", "1.24861", "1.27861", "1.24100", "1.24518", "0.00", "0.00", "11.66"],
];
const terminalTabs: [string, string?][] = [
  ["Торговля"], ["Активы"], ["История Счета"], ["Новости", "99"], ["Алерты"], ["Почта", "19"], ["Маркет", "100"], ["Сигналы"],
  ["Статьи"], ["Библиотека"], ["Эксперты"], ["Журнал"],
];

/* ---------- page parts ---------- */

const MainToolBar = () => (
  <ToolBar>
    <ToolGroup $under>
      <Grip />
      <ToolButton $menu aria-label="Новый график"><NewChartIcon /><Caret /></ToolButton>
      <ToolButton $menu aria-label="Профили"><ProfilesIcon /><Caret /></ToolButton>
      <ToolSeparator />
      <ToolButton aria-label="Обзор рынка"><MarketIcon /></ToolButton>
      <ToolButton aria-label="Окно данных"><TargetIcon /></ToolButton>
      <ToolButton aria-label="Навигатор"><NavigatorIcon /></ToolButton>
      <ToolButton $on aria-label="Терминал"><PanelIcon /></ToolButton>
      <ToolButton aria-label="Тестер стратегий"><TesterIcon /></ToolButton>
      <ToolSeparator />
      <LabelledButton><NewOrderIcon />Новый ордер</LabelledButton>
      <ToolButton aria-label="Редактор"><BookIcon /></ToolButton>
      <ToolButton aria-label="Хостинг"><VpsIcon /></ToolButton>
      <ToolButton aria-label="Сигналы"><SignalIcon /></ToolButton>
      <LabelledButton $on><RobotIcon />Авто-торговля</LabelledButton>
    </ToolGroup>
    <ToolGroup $under>
      <Grip />
      <ToolButton aria-label="Бары"><BarsIcon /></ToolButton>
      <ToolButton $on aria-label="Свечи"><CandleIcon /></ToolButton>
      <ToolButton aria-label="Линия"><LineIcon /></ToolButton>
      <ToolSeparator />
      <ToolButton aria-label="Увеличить"><Loupe plus /></ToolButton>
      <ToolButton aria-label="Уменьшить"><Loupe /></ToolButton>
      <ToolButton aria-label="Окна"><TileIcon /></ToolButton>
      <ToolSeparator />
      <ToolButton $on aria-label="Автопрокрутка"><ScrollIcon /></ToolButton>
      <ToolButton $on aria-label="Сдвиг графика"><ShiftIcon /></ToolButton>
      <ToolSeparator />
      <ToolButton $menu aria-label="Индикаторы"><IndicatorIcon /><Caret /></ToolButton>
      <ToolButton $menu aria-label="Периоды"><ClockIcon /><Caret /></ToolButton>
      <ToolButton $menu aria-label="Шаблоны"><TemplateIcon /><Caret /></ToolButton>
    </ToolGroup>
    <ToolTail><SearchIcon /><ChatIcon /></ToolTail>
  </ToolBar>
);

const DrawToolBar = () => (
  <ToolBar $last>
    <ToolGroup>
      <Grip />
      <ToolButton $on aria-label="Курсор"><CursorIcon /></ToolButton>
      <ToolButton aria-label="Перекрестие"><CrossIcon /></ToolButton>
      <ToolSeparator />
      <ToolButton aria-label="Вертикальная линия"><StrokeIcon d="M7 1v12" /></ToolButton>
      <ToolButton aria-label="Горизонтальная линия"><StrokeIcon d="M1 7h12" /></ToolButton>
      <ToolButton aria-label="Трендовая линия"><StrokeIcon d="M2 12L12 2" /></ToolButton>
      <ToolButton aria-label="Канал"><ChannelIcon /></ToolButton>
      <ToolButton aria-label="Фибоначчи"><FiboIcon /></ToolButton>
      <ToolSeparator />
      <ToolButton aria-label="Прямоугольник">
        <svg width="13" height="9" viewBox="0 0 13 9"><rect x=".6" y=".6" width="11.8" height="7.8" rx="1" fill="#999" stroke="#444" /></svg>
      </ToolButton>
      <ToolButton aria-label="Текст"><TextIcon /></ToolButton>
      <ToolButton $menu aria-label="Стрелки"><ShapesIcon /><Caret /></ToolButton>
    </ToolGroup>
    <ToolGroup>
      <Grip />
      {frames.map((f) => <ToolButton key={f} $on={f === "H1"}>{f}</ToolButton>)}
    </ToolGroup>
  </ToolBar>
);

const Chart = () => (
  <ChartWindow>
    <ChartColumn>
      <Plot>
        <ChartDrawing />
        <ChartCaption>
          <svg width="7" height="5" viewBox="0 0 7 5"><path d="M0 0h7L3.5 4.5z" fill="#111" /></svg>
          <span>EURUSD,H1  1.08537 1.08587 1.08322 1.08341</span>
        </ChartCaption>
        <Motto><span>ЖИЗНЬ -</span><span>!!!</span></Motto>
        <OrderCaption>#1906639256 sell 4.82</OrderCaption>
        <ChartNote>мой</ChartNote>
        <LevelTag>1.08481</LevelTag>
        <Account><span>TOP-LimON</span><AccountId>80679474<Smile /></AccountId></Account>
        <Stats>
          <Stat>Заработок сегодня: 0.00/0.0</Stat>
          <Stat>Заработок вчера: -80.67/-0.4</Stat>
          <Stat>Прибыль за месяц: 30.61/0.1</Stat>
          <Stat $gap={5}>Прибыль: 0.92%</Stat>
          <Stat $gap={9}>Убыточных: 3</Stat>
        </Stats>
        <TradePanel>
          <PanelRow><PanelButton $tone="dark">Закрыть все ордера</PanelButton></PanelRow>
          <PanelRow><PanelButton $tone="salmon">Остановить</PanelButton></PanelRow>
          <PanelRow><PanelButton $tone="grey">NO trail</PanelButton></PanelRow>
          <PanelRow><PanelButton $tone="green">Переворот</PanelButton></PanelRow>
          <PanelRow><PanelButton $tone="grey">Направление</PanelButton></PanelRow>
          <PanelRow>
            <CountLabel htmlFor="count">Колич.</CountLabel>
            <CountBox>
              <CountSelect id="count" defaultValue="2">
                <option>1</option><option>2</option><option>3</option>
              </CountSelect>
              <CountArrow><svg width="17" height="8" viewBox="0 0 17 8"><path d="M0 0h17L8.500 8z" fill="#101426" /></svg></CountArrow>
            </CountBox>
          </PanelRow>
          <PanelRow>
            <PanelButton $tone="grey">SELL</PanelButton>
            <PanelButton $tone="grey">BUY</PanelButton>
          </PanelRow>
        </TradePanel>
      </Plot>
      <TimeAxis>{times.map((t) => <TimeLabel key={t}>{t}</TimeLabel>)}</TimeAxis>
    </ChartColumn>
    <PriceAxis>
      {prices.map((p) => <PriceLabel key={p}>{p}</PriceLabel>)}
      <CurrentPrice>1.08341</CurrentPrice>
    </PriceAxis>
  </ChartWindow>
);

const OrdersTable = () => (
  <Orders>
    <colgroup>{columns.map(([name, w], i) => <col key={name + i} width={w} />)}</colgroup>
    <thead>
      <HeadRow>
        {columns.map(([name], i) => (
          <Head key={name + i} $first={i === 0}>{name}{i === 0 && <SortMark>/</SortMark>}</Head>
        ))}
      </HeadRow>
    </thead>
    <tbody>
      {orders.map((row, r) => (
        <BodyRow key={row[0]} $alt={r === 1}>
          {row.map((v, i) => (
            <Cell key={i} $first={i === 0}>
              {i === 0 ? (
                <IconText><DocIcon />{v}</IconText>
              ) : i === row.length - 1 ? (
                <Profit>{v}<RowClose aria-label="Закрыть"><GreyCross /></RowClose></Profit>
              ) : v}
            </Cell>
          ))}
        </BodyRow>
      ))}
      <SumRow>
        <Cell $first colSpan={11}>
          <IconText><BalanceIcon />Баланс: 22 564.64 USD  Средства: 22 783.08  Маржа: 141.72  Свободная маржа: 22 641.36  Уровень: 16076.44%</IconText>
        </Cell>
        <Cell $first><ProfitSum>218.44</ProfitSum></Cell>
      </SumRow>
    </tbody>
  </Orders>
);

export default function App() {
  return (
    <Desktop>
      <GlobalStyle />
      <TitleBar>
        <TitleIcon><Cog size={17} /></TitleIcon>
        <Title>80679474: InstaForex-USA2.com - [EURUSD,H1]</Title>
        <WindowButtons>
          <WindowButton aria-label="Свернуть"><svg width="10" height="8" viewBox="0 0 10 8"><path d="M0 6h10" stroke="#111" strokeWidth="3" /></svg></WindowButton>
          <WindowButton aria-label="Восстановить"><svg width="11" height="10" viewBox="0 0 11 10" fill="none" stroke="#111"><path d="M3 .7h7v6" /><path d="M1.500 3.500h6v5h-6z" strokeWidth="2" /></svg></WindowButton>
          <WindowButton $wide aria-label="Закрыть"><svg width="9" height="8" viewBox="0 0 9 8"><path d="M1 .5l7 7M8 .5l-7 7" stroke="#111" strokeWidth="2.2" /></svg></WindowButton>
        </WindowButtons>
      </TitleBar>
      <MenuBar>
        <ChartMenu aria-label="Окно графика"><MdiIcon /></ChartMenu>
        {menus.map((m) => <MenuItem key={m}>{m}</MenuItem>)}
        <MdiButtons>
          <MdiButton aria-label="Свернуть график"><svg width="6" height="8" viewBox="0 0 6 8"><path d="M0 7h6" stroke="#111" strokeWidth="2" /></svg></MdiButton>
          <MdiButton aria-label="Восстановить график"><svg width="8" height="8" viewBox="0 0 8 8" fill="none" stroke="#111"><path d="M2.500 3V.8h5V5H5.500" strokeWidth="1.4" /><path d="M.6 3.500h4.400v3.800H.6z" strokeWidth="1.2" /></svg></MdiButton>
          <MdiButton aria-label="Закрыть график"><svg width="8" height="8" viewBox="0 0 8 8"><path d="M1 1l6 6M7 1L1 7" stroke="#111" strokeWidth="2" /></svg></MdiButton>
        </MdiButtons>
      </MenuBar>
      <MainToolBar />
      <DrawToolBar />
      <Chart />
      <ChartTabs>
        <ChartTab $on>EURUSD,H1</ChartTab>
        <ChartTab>GBPUSD,H1</ChartTab>
        <TabMark />
        <TabScroll>
          <svg width="4" height="6" viewBox="0 0 4 6"><path d="M4 0v6L0 3z" fill="#888" /></svg>
          <svg width="4" height="6" viewBox="0 0 4 6"><path d="M0 0v6l4-3z" fill="#888" /></svg>
        </TabScroll>
      </ChartTabs>
      <Terminal>
        <TerminalRail>
          <RailClose aria-label="Закрыть терминал"><svg width="6" height="6" viewBox="0 0 6 6"><path d="M.5.5l5 5M5.5.5l-5 5" stroke="#111" strokeWidth="1.5" /></svg></RailClose>
          <RailTitle>Терминал</RailTitle>
        </TerminalRail>
        <TerminalBody>
          <OrdersTable />
          <TerminalTabs>
            {terminalTabs.map(([name, n], i) => (
              <TerminalTab key={name} $on={i === 0}>{name}{n && <Count>{n}</Count>}</TerminalTab>
            ))}
          </TerminalTabs>
        </TerminalBody>
        <Watermark>
          <WatermarkTitle>Активация Windows</WatermarkTitle>
          Чтобы активировать Windows, перейдите в<br />компонент панели управления "Система".
        </Watermark>
      </Terminal>
      <StatusBar>
        <StatusHelp>Для вызова справки нажмите F1</StatusHelp>
        <StatusCell $w={109}>Default</StatusCell>
        <StatusCell $w={95}>2020.04.03 02:00</StatusCell>
        <StatusCell $w={66}>O: 1.08495</StatusCell>
        <StatusCell $w={67}>H: 1.08508</StatusCell>
        <StatusCell $w={63}>L: 1.08418</StatusCell>
        <StatusCell $w={66}>C: 1.08457</StatusCell>
        <StatusCell $w={62}>V: 1184</StatusCell>
        <StatusCell $w={122}><BandwidthIcon />510102/40 kb</StatusCell>
      </StatusBar>
      <TaskBar>
        <StartButton aria-label="Пуск"><WindowsIcon /></StartButton>
        <TaskButton aria-label="Диспетчер серверов"><ServerIcon /></TaskButton>
        <TaskButton aria-label="PowerShell"><ShellIcon /></TaskButton>
        <TaskButton aria-label="Проводник"><FolderIcon /></TaskButton>
        <TaskButton $state="open" aria-label="Терминал 1"><TraderIcon /></TaskButton>
        <TaskButton $state="front" aria-label="Терминал 2"><TraderIcon /></TaskButton>
        <TaskButton $state="open" aria-label="InstaForex"><Cog size={31} /></TaskButton>
        <Tray>
          <UsbIcon /><SoundIcon /><NetIcon /><FlagIcon />
          <Language>РУС</Language>
          <Clock>10:32<br />17.04.2020</Clock>
        </Tray>
      </TaskBar>
    </Desktop>
  );
}
